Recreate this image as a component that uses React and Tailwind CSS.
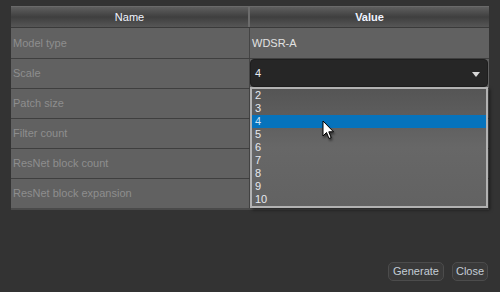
import React from "react";

const rows = [
  { name: "Model type", value: "WDSR-A" },
  { name: "Scale", value: "" },
  { name: "Patch size", value: "" },
  { name: "Filter count", value: "" },
  { name: "ResNet block count", value: "" },
  { name: "ResNet block expansion", value: "" },
];

const options = ["2", "3", "4", "5", "6", "7", "8", "9", "10"];

const Cursor = () => (
  <svg width="14" height="22" viewBox="0 0 14 22" className="absolute left-[322px] top-[120px] drop-shadow-[1px_2px_1px_rgba(0,0,0,0.5)]">
    <path d="M1 1 L1 16 L4.5 12.5 L7 18.5 L9.2 17.6 L6.8 11.8 L11.5 11.8 Z" fill="#fff" stroke="#000" strokeWidth="1" strokeLinejoin="miter" />
  </svg>
);

export default function App() {
  return (
    <div
      className="relative w-[500px] h-[292px] bg-[#333333] flex flex-col text-[11px]"
      style={{ fontFamily: '"Liberation Sans", Arial, sans-serif' }}
    >
      {/* table */}
      <div className="ml-[11px] mt-[6px] w-[478px] bg-[#616161] border-b-2 border-[#4a4a4a]">
        <div className="grid grid-cols-[239px_239px] h-[22px] bg-gradient-to-b from-[#5f5f5f] via-[#3f3f3f] to-[#565656] border-t border-[#6a6a6a] border-b border-b-[#3a3a3a]">
          <div className="flex items-center justify-center text-[#f0f4ff] border-r-2 border-[#6c6c6c]">Name</div>
          <div className="flex items-center justify-center text-[#f0f4ff] font-bold">Value</div>
        </div>
        {rows.map((r, i) => (
          <div
            key={i}
            className={`grid grid-cols-[239px_239px] h-[30px] ${i > 0 ? "border-t border-[#3f3f3f]" : ""}`}
          >
            <div className="flex items-center pl-[2px] text-[#8e8e8e] border-r border-[#444]">{r.name}</div>
            <div className="flex items-center pl-[2px] text-[#e2e2e2]">{r.value}</div>
          </div>
        ))}
      </div>

      <div className="flex-1" />

      {/* buttons */}
      <div className="flex justify-end gap-[8px] pr-[12px] pb-[11px]">
        <button className="h-[19px] w-[56px] rounded-[5px] bg-[#3a3a3a] border border-[#4c4c4c] text-[#c4cdd6] leading-none">
          Generate
        </button>
        <button className="h-[19px] w-[36px] rounded-[5px] bg-[#3a3a3a] border border-[#4c4c4c] text-[#c4cdd6] leading-none">
          Close
        </button>
      </div>

      {/* open combobox */}
      <div className="absolute left-[250px] top-[59px] w-[238px] h-[28px] rounded-[4px] bg-[#262626] border border-[#1e1e1e] flex items-center pl-[4px] text-[#e8ecf4]">
        4
        <svg width="8" height="5" viewBox="0 0 8 5" className="absolute right-[7px] top-[12px]">
          <path d="M0 0 H8 L4 5 Z" fill="#d8d8d8" />
        </svg>
      </div>
      <div className="absolute left-[250px] top-[87px] w-[238px] h-[121px] border-2 border-[#b2b2b2] bg-gradient-to-b from-[#555] via-[#676767] to-[#626262] shadow-[2px_2px_3px_rgba(0,0,0,0.5)]">
        {options.map((o) => (
          <div
            key={o}
            className={`h-[13px] flex items-center pl-[3px] leading-none ${o === "4" ? "bg-[#0673bc] text-[#cfe2f5]" : "text-[#e6e9ef]"}`}
          >
            {o}
          </div>
        ))}
      </div>
      <Cursor />
    </div>
  );
}
